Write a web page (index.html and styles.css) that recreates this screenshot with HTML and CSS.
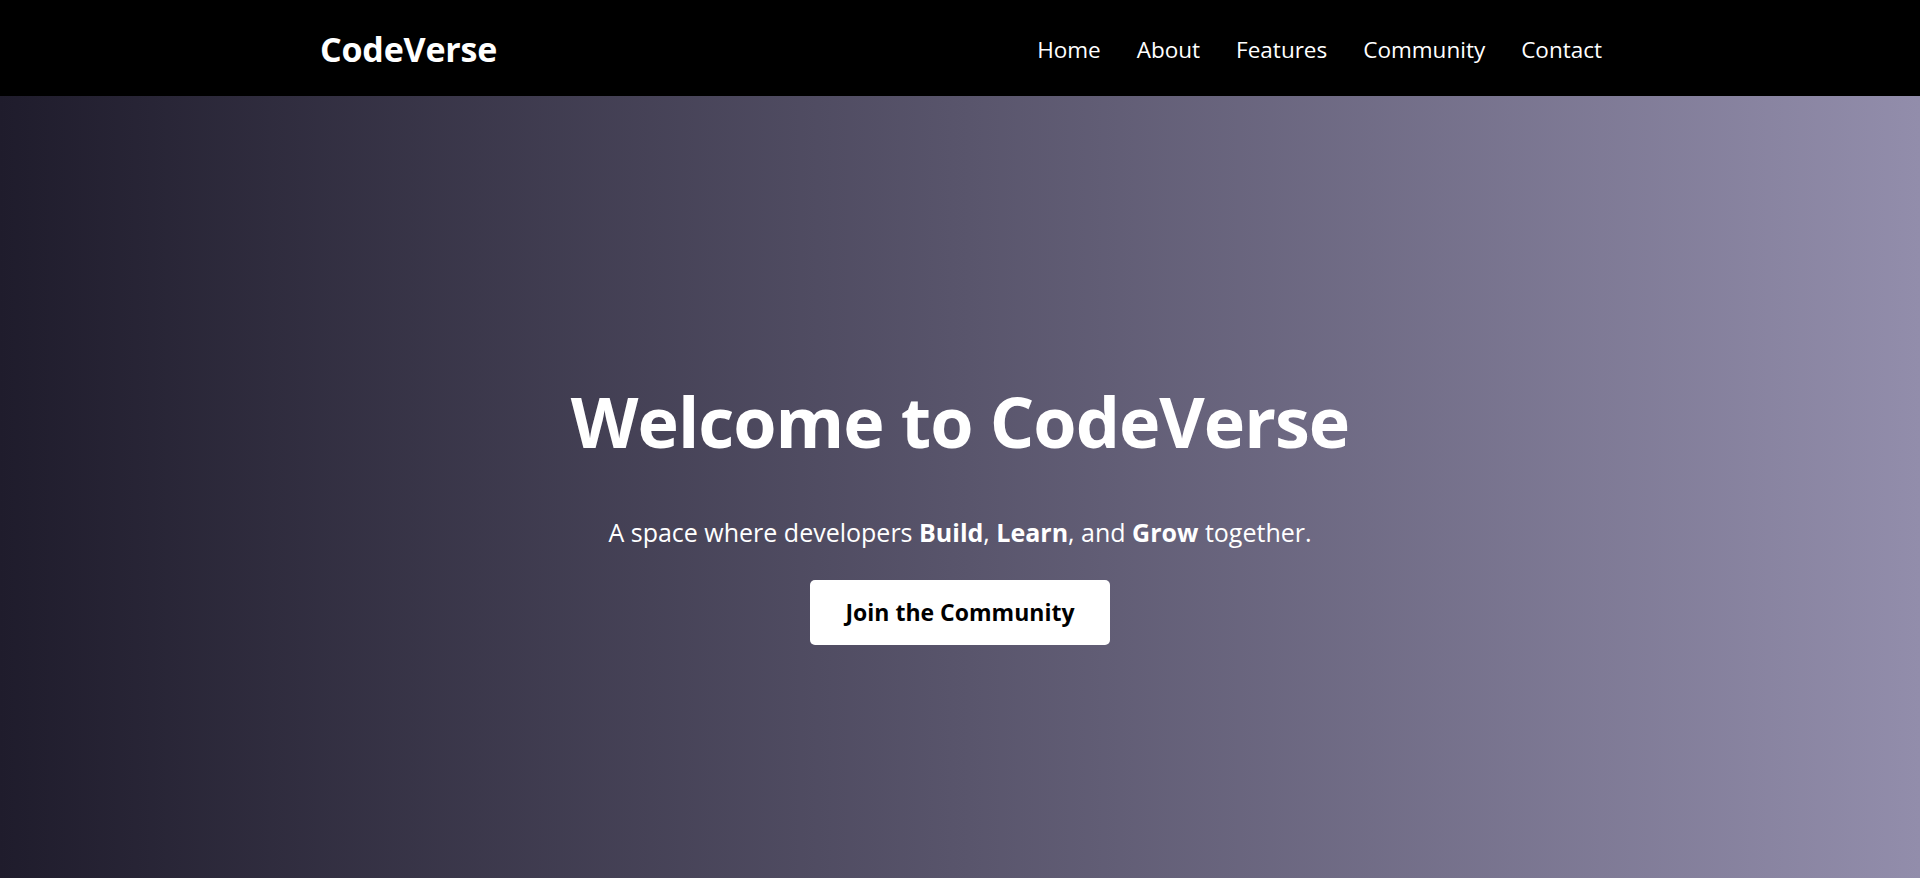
FILE: index.html
```html
<!DOCTYPE html>
<html lang="en">
<head>
<meta charset="UTF-8">
<title>CodeVerse</title>
<link rel="stylesheet" href="styles.css">
</head>
<body>
<header class="site-header">
  <div class="container header-inner">
    <div class="logo">CodeVerse</div>
    <nav class="nav">
      <a href="#">Home</a>
      <a href="#">About</a>
      <a href="#">Features</a>
      <a href="#">Community</a>
      <a href="#">Contact</a>
    </nav>
  </div>
</header>
<section class="hero">
  <h1 class="hero-title">Welcome to CodeVerse</h1>
  <p class="hero-sub">A space where developers <strong>Build</strong>, <strong>Learn</strong>, and <strong>Grow</strong> together.</p>
  <a class="btn" href="#">Join the Community</a>
</section>
</body>
</html>
```
FILE: styles.css
```css
* { box-sizing: border-box; }
html, body { margin: 0; padding: 0; }
body {
  font-family: "Open Sans", "Noto Sans", sans-serif;
  color: #fff;
  height: 878px;
  overflow: hidden;
  background: linear-gradient(to right, #1f1c2c, #928dab);
}
.site-header {
  background: #000;
  height: 96px;
}
.container {
  width: 1284px;
  margin: 0 auto;
  padding-left: 2px;
}
.header-inner {
  height: 100%;
  display: flex;
  align-items: center;
  justify-content: space-between;
}
.logo {
  font-size: 34px;
  font-weight: 700;
  letter-spacing: -0.2px;
  padding-top: 2px;
}
.nav {
  display: flex;
  gap: 36px;
  padding-top: 2px;
}
.nav a {
  color: #fff;
  text-decoration: none;
  font-size: 22.5px;
}
.hero {
  height: 782px;
  display: flex;
  flex-direction: column;
  align-items: center;
  padding-top: 281px;
  text-align: center;
}
.hero-title {
  margin: 0;
  font-size: 70px;
  line-height: 88px;
  font-weight: 700;
  letter-spacing: -1px;
}
.hero-sub {
  margin: 49px 0 0;
  font-size: 25px;
  line-height: 36px;
}
.hero-sub strong { font-weight: 700; }
.btn {
  margin-top: 30px;
  display: inline-block;
  background: #fff;
  color: #000;
  text-decoration: none;
  font-weight: 700;
  font-size: 23px;
  line-height: 32px;
  padding: 16px 35px 17px;
  border-radius: 5px;
}
```
